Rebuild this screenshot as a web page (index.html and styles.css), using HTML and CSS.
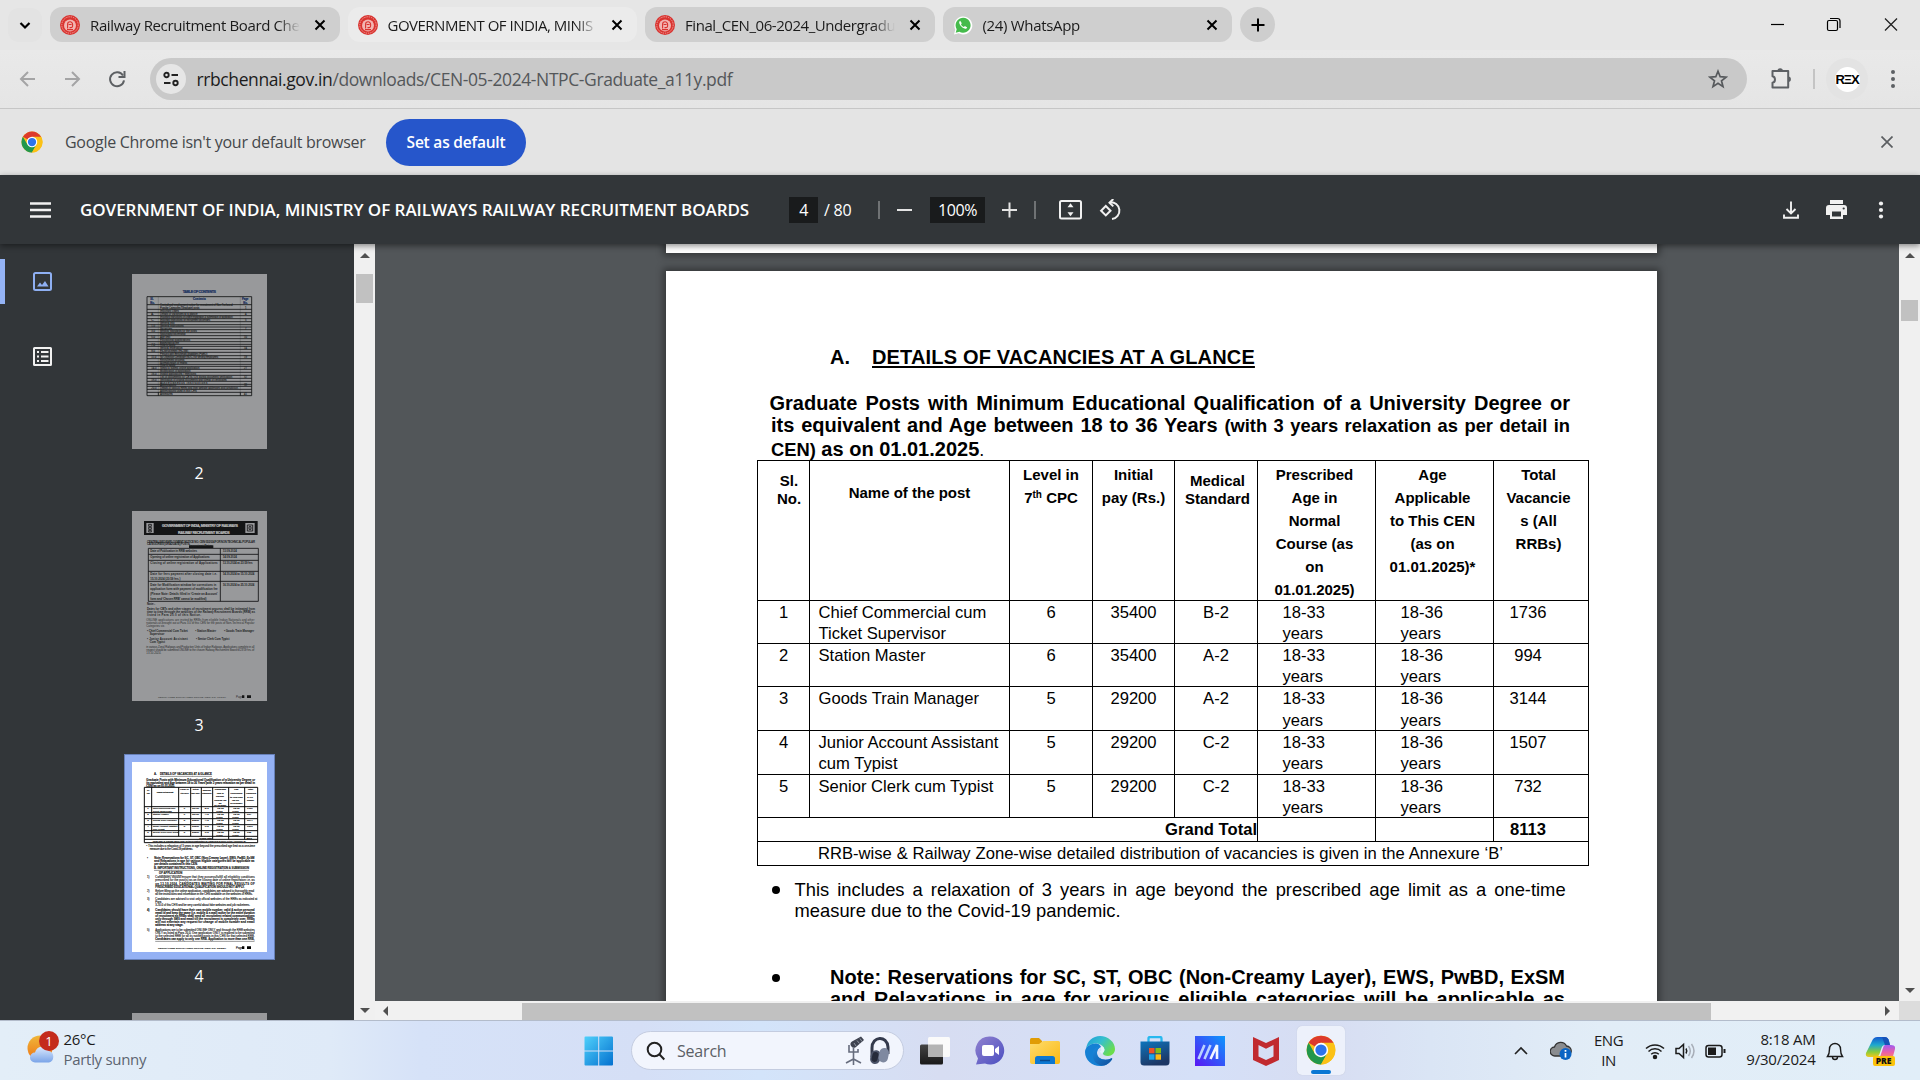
FILE: index.html
```html
<!DOCTYPE html>
<html lang="en">
<head>
<meta charset="utf-8">
<title>GOVERNMENT OF INDIA, MINISTRY OF RAILWAYS RAILWAY RECRUITMENT BOARDS</title>
<link rel="stylesheet" href="styles.css">
</head>
<body>
<svg class="defs" width="0" height="0">
  <defs>
    <symbol id="rrb" viewBox="0 0 20 20">
      <circle cx="10" cy="10" r="10" fill="#d9332f"/>
      <circle cx="10" cy="10" r="8.200" fill="none" stroke="#f0a09c" stroke-width="1" stroke-dasharray="1.4 .9"/>
      <circle cx="10" cy="10.500" r="6" fill="#f2b5b2"/>
      <path d="M7.600 13.500V9.300a2.500 2.500 0 0 1 5 0v1.800a1.500 1.500 0 0 1-1.500 1.500H9.500M8.600 9.500h3M7 14.600h6" fill="none" stroke="#d9332f" stroke-width="1.100"/>
    </symbol>
    <symbol id="x" viewBox="0 0 12 12"><path d="M1.500 1.500l9 9M10.500 1.500l-9 9" fill="none" stroke="currentColor" stroke-width="2"/></symbol>
    <symbol id="chrome" viewBox="0 0 48 48">
      <circle cx="24" cy="24" r="23" fill="#fbc116"/>
      <path d="M24 24L4.100 12.500A23 23 0 0 1 43.900 12.500z" fill="#dd3a2c"/>
      <path d="M4.100 12.500A23 23 0 0 0 24 47L34 29.700 24 24 14 29.700z" fill="#22974c"/>
      <path d="M24 47a23 23 0 0 0 19.900-34.500H24L34 29.700z" fill="#fbc116"/>
      <circle cx="24" cy="24" r="11.500" fill="#fff"/><circle cx="24" cy="24" r="9" fill="#2d73ea"/>
    </symbol>
  </defs>
</svg>
<div class="screen">

  <div class="tabstrip">
    <div class="tab-search"><svg width="12" height="9" viewBox="0 0 12 9"><path d="M1.500 2l4.500 4.500L10.500 2" fill="none" stroke="#000" stroke-width="2.200"/></svg></div>
    <div class="tabs">
      <div class="tab"><svg class="fav"><use href="#rrb"/></svg><span class="tab-title t1">Railway Recruitment Board Cher</span><svg class="tab-x"><use href="#x"/></svg></div>
      <div class="tab active"><svg class="fav"><use href="#rrb"/></svg><span class="tab-title t2">GOVERNMENT OF INDIA, MINIS</span><svg class="tab-x"><use href="#x"/></svg></div>
      <div class="tab"><svg class="fav"><use href="#rrb"/></svg><span class="tab-title t3">Final_CEN_06-2024_Undergradu</span><svg class="tab-x"><use href="#x"/></svg></div>
      <div class="tab"><svg class="fav" viewBox="0 0 20 20"><path d="M1 19.500l1.300-4.900A9 9 0 1 1 5.700 18.200z" fill="#fff"/><path d="M2.700 17.800l1-3.600a7.500 7.500 0 1 1 2.700 2.600z" fill="#45bb4c"/><path d="M7.200 5.800c-.9.500-1.300 1.500-.8 2.800.9 2.400 2.700 4.200 5 5 1.300.4 2.400-.1 2.800-1.200l-2.300-1.300-1 1c-1.500-.7-2.300-1.600-2.900-2.900l.8-1z" fill="#fff"/></svg><span class="tab-title t4">(24) WhatsApp</span><svg class="tab-x"><use href="#x"/></svg></div>
    </div>
    <div class="new-tab"><svg width="14" height="14" viewBox="0 0 14 14"><path d="M7 .5v13M.5 7h13" stroke="#000" stroke-width="2"/></svg></div>
    <div class="win-controls">
      <svg viewBox="0 0 57 50"><path d="M22 24.500h13" stroke="#000" stroke-width="1.200"/></svg>
      <svg viewBox="0 0 57 50"><rect x="21.500" y="20.500" width="10" height="10" rx="1.500" fill="none" stroke="#000" stroke-width="1.200"/><path d="M24 18.500h7.500a2.500 2.500 0 0 1 2.500 2.500v7" fill="none" stroke="#000" stroke-width="1.200"/></svg>
      <svg viewBox="0 0 57 50"><path d="M22 18.500l12 12M34 18.500l-12 12" stroke="#222" stroke-width="1.300"/></svg>
    </div>
  </div>

  <div class="navbar">
    <svg class="nav-icons" width="150" height="58" viewBox="0 0 150 58" fill="none" stroke-width="2">
      <path d="M35 29H21.500M28 22l-7 7 7 7" stroke="#a4a4a5"/>
      <path d="M65 29h13.500M72 22l7 7-7 7" stroke="#a4a4a5"/>
      <path d="M123 25.500a7 7 0 1 0 1 4.800" stroke="#5d6063"/><path d="M124.500 21v6h-6" stroke="#5d6063"/>
    </svg>
    <div class="omnibox">
      <div class="site-info"><svg width="16" height="16" viewBox="0 0 16 16" fill="none" stroke="#222" stroke-width="1.900"><circle cx="3.500" cy="4" r="2.200"/><path d="M8.500 4H15M1 12h6.500"/><circle cx="12.500" cy="12" r="2.200"/></svg></div>
      <div class="url"><b>rrbchennai.gov.in</b>/downloads/CEN-05-2024-NTPC-Graduate_a11y.pdf</div>
      <svg class="star" width="20" height="20" viewBox="0 0 20 20"><path d="M10 2.200l2.200 5.500 5.900.4-4.600 3.700 1.500 5.800-5-3.300-5 3.300 1.500-5.800L1.900 8.100l5.900-.4z" fill="none" stroke="#56595c" stroke-width="1.700"/></svg>
    </div>
    <svg class="puzzle" width="24" height="24" viewBox="0 0 24 24"><path d="M3.500 5h15.700v16.500H3.500v-4.700c3.300-.6 3.300-6 0-6.600z" fill="none" stroke="#5d6064" stroke-width="2" stroke-linejoin="round"/><path d="M8.500 5a2.700 2.700 0 0 1 5.400 0M19.200 10.500a2.700 2.700 0 0 1 0 5.400" fill="#5d6064"/></svg>
    <i class="nav-divider"></i>
    <div class="avatar"><span>RΞX</span></div>
    <svg class="kebab" width="6" height="20" viewBox="0 0 6 20" fill="#5d6064"><circle cx="3" cy="3" r="2"/><circle cx="3" cy="10" r="2"/><circle cx="3" cy="17" r="2"/></svg>
  </div>

  <div class="infobar">
    <svg class="info-chrome"><use href="#chrome"/></svg>
    <span class="info-text">Google Chrome isn't your default browser</span>
    <span class="info-btn">Set as default</span>
    <svg class="info-x" width="12" height="12" viewBox="0 0 12 12"><path d="M.5.5l11 11M11.500.5l-11 11" stroke="#5b5e61" stroke-width="1.700"/></svg>
  </div>

  <div class="pdfbar">
    <svg class="burger" width="21" height="16" viewBox="0 0 21 16"><path d="M0 1.500h21M0 8h21M0 14.500h21" stroke="#f1f1f1" stroke-width="2.300"/></svg>
    <span class="pdf-title">GOVERNMENT OF INDIA, MINISTRY OF RAILWAYS RAILWAY RECRUITMENT BOARDS</span>
    <span class="box page-no">4</span><span class="page-of">/ 80</span>
    <i class="sep s1"></i>
    <svg class="minus" width="15" height="16" viewBox="0 0 15 16"><path d="M0 8h15" stroke="#e4e4e4" stroke-width="2"/></svg>
    <span class="box zoom">100%</span>
    <svg class="plus" width="15" height="16" viewBox="0 0 15 16"><path d="M0 8h15M7.500.5v15" stroke="#e4e4e4" stroke-width="2"/></svg>
    <i class="sep s2"></i>
    <svg class="fit" width="23" height="20" viewBox="0 0 23 20"><rect x="1" y="1" width="21" height="17.500" rx="1.500" fill="none" stroke="#f1f1f1" stroke-width="2"/><path d="M11.500 3.200l3 4h-6zM11.500 16.300l3-4h-6z" fill="#f1f1f1"/></svg>
    <svg class="rotate" width="23" height="22" viewBox="0 0 23 22" fill="none" stroke="#f1f1f1" stroke-width="2"><path d="M6.800 7l4.700 4.700-4.700 4.700-4.700-4.700z"/><path d="M11 3.300a8.400 8.400 0 1 1 2 16.700"/><path d="M14.300 0L10.500 3.700l3.800 3.700"/></svg>
    <svg class="download" width="16" height="18" viewBox="0 0 16 18" fill="none" stroke="#f1f1f1" stroke-width="1.900"><path d="M8 .5v12M3.500 8L8 12.500 12.500 8M1 13.500v3.300h14v-3.300"/></svg>
    <svg class="print" width="21" height="19" viewBox="0 0 21 19"><path d="M4 0h13v4H4zM3 5h15a3 3 0 0 1 3 3v7h-4v4H4v-4H0V8a3 3 0 0 1 3-3z" fill="#f1f1f1"/><path d="M6 11.500h9v5H6z" fill="#323639"/><circle cx="17.700" cy="8.500" r="1.100" fill="#323639"/></svg>
    <svg class="kebab2" width="6" height="18" viewBox="0 0 6 18" fill="#f1f1f1"><circle cx="3" cy="2.500" r="2.100"/><circle cx="3" cy="9" r="2.100"/><circle cx="3" cy="15.500" r="2.100"/></svg>
  </div>

  <div class="viewer">
    <div class="rail">
      <div class="rail-item on"><svg width="19" height="19" viewBox="0 0 19 19"><rect x="1" y="1" width="17" height="17" rx="1.500" fill="none" stroke="#8fb0f3" stroke-width="2"/><path d="M4 14.500l3-4 2 2.500 3-4 3.500 5.500z" fill="#8fb0f3"/></svg></div>
      <div class="rail-item"><svg width="19" height="19" viewBox="0 0 19 19" fill="none" stroke="#f1f1f1"><rect x="1" y="1" width="17" height="17" rx=".5" stroke-width="2"/><path d="M4 5h2M4 9.500h2M4 14h2M8 5h7.500M8 9.500h7.500M8 14h7.500" stroke-width="2"/></svg></div>
    </div>
    <div class="thumbs">
      <svg class="thumb" width="135" height="175" viewBox="0 0 405 525">
        <rect width="405" height="525" fill="#98999b"/>
        <g fill="none" stroke="#151617" stroke-width="2.600">
          <path d="M45 68h314v297H45zM45 92h314M45 106h314M45 116h314M45 125h314M45 134h314M45 143h314M45 152h314M45 159h314M45 167h314M45 176h314M45 185h314M45 194h314M45 203h314M45 211h314M45 217h314M45 226h314M45 235h314M45 245h314M45 254h314M45 263h314M45 271h314M45 277h314M45 286h314M45 295h314M45 304h314M45 313h314M45 322h314M45 331h314M45 337h314M45 346h314M45 355h314"/>
          <path d="M79 355v10M325 355v10"/><path d="M79 68v290M325 68v290" stroke-width="1" opacity=".5"/>
        </g>
        <g font-size="8" font-weight="bold" fill="#20335f" stroke="#20335f" stroke-width=".7"><text x="152" y="56" font-size="11" textLength="100">TABLE OF CONTENTS</text><text x="55" y="78">Sl.</text><text x="55" y="89">No.</text><text x="183" y="79" textLength="38">Contents</text><text x="330" y="78">Page</text><text x="334" y="89">No.</text></g>
        <g font-size="8" fill="#242526" stroke="#242526" stroke-width=".3">
          <text x="84" y="97" textLength="218">Centralised employment notice for recruitment of Non Technical</text><text x="84" y="105" textLength="118">Popular Categories (Graduate) posts</text><text x="84" y="115">Important Dates</text><text x="84" y="124">Details of vacancies at a glance</text><text x="84" y="133" textLength="218">Important instructions on online registration &amp; submission of application</text><text x="84" y="142" textLength="150">Important instructions on recruitment processes</text><text x="84" y="151">General info</text><text x="84" y="159">General instructions</text><text x="84" y="167">Vacancies</text><text x="84" y="175">Medical standards for the posts</text><text x="84" y="184">Nationality/citizenship</text><text x="84" y="193">Age limit</text><text x="84" y="202">Educational qualifications</text><text x="84" y="210">Examination fee</text><text x="84" y="217">How to apply</text><text x="84" y="225">Vertical reservation</text><text x="84" y="234">Ex-servicemen (Ex-SM)</text><text x="84" y="244" textLength="142">Persons with Benchmark disabilities (PwBD)</text><text x="84" y="253" textLength="174">No Objection Certificate (NOC) for serving employees</text><text x="84" y="262">Recruitment process</text><text x="84" y="270">Normalization of marks</text><text x="84" y="277">How to apply</text><text x="84" y="285">Steps to submit online application</text><text x="84" y="294">Modification of application</text><text x="84" y="303">Invalid applications / rejections</text><text x="84" y="312" textLength="217">List of documents for CBTs / DV during document verification</text><text x="84" y="321" textLength="200">Verification of original documents and format of certificates</text><text x="84" y="330" textLength="142">Miscellaneous instructions</text><text x="84" y="337">Abbreviations</text><text x="84" y="345" textLength="234">Details of various RRBs and their website addresses and jurisdiction</text><text x="84" y="354">Abbreviations used in this CEN</text><text x="84" y="363">Annexures</text>
          <text x="58" y="124">A.</text><text x="58" y="142">C.</text><text x="58" y="159">1.0</text><text x="58" y="175">3.0</text><text x="58" y="193">5.0</text><text x="58" y="217">7.0</text><text x="58" y="234">9.0</text><text x="58" y="253">11.0</text><text x="58" y="285">14.0</text><text x="58" y="303">16.0</text><text x="58" y="321">18.0</text><text x="58" y="345">20.0</text><text x="339" y="105">1</text><text x="339" y="124">4</text><text x="339" y="142">5</text><text x="339" y="167">7</text><text x="336" y="193">10</text><text x="336" y="225">14</text><text x="336" y="253">19</text><text x="336" y="285">27</text><text x="336" y="312">32</text><text x="336" y="337">38</text><text x="336" y="363">41</text>
        </g>
      </svg>
      <span class="thumb-no">2</span>
      <svg class="thumb th3" width="135" height="190" viewBox="0 0 405 570">
        <rect width="405" height="570" fill="#98999b"/>
        <rect x="36" y="30" width="341" height="42" fill="#141516"/><rect x="43" y="36" width="22" height="30" fill="#98999b"/><rect x="340" y="36" width="28" height="30" fill="#98999b"/><path d="M50 40h8v6h-8zM50 49h8v6h-8zM50 58h8v5h-8zM346 42h16v18h-16zM351 47h6v8h-6z" fill="none" stroke="#141516" stroke-width="2.500"/>
        <g font-size="11" font-weight="bold" fill="#b9babb" stroke="#b9babb" stroke-width=".6"><text x="90" y="49" textLength="228">GOVERNMENT OF INDIA, MINISTRY OF RAILWAYS</text><text x="138" y="68" textLength="155">RAILWAY RECRUITMENT BOARDS</text></g>
        <rect x="171" y="103" width="73" height="8" fill="#141516"/>
        <path d="M49 112h330v159H49zM265 112v159M49 130h330M49 148h330M49 181h330M49 211h330" fill="none" stroke="#141516" stroke-width="2.600"/>
        <g font-size="8.500" fill="#1b1c1d" font-weight="bold">
          <text x="45" y="96" textLength="324">CENTRALISED EMPLOYMENT NOTICE NO. CEN 05/2024 FOR NON TECHNICAL POPULAR</text><text x="45" y="103" textLength="128">CATEGORIES (GRADUATE) POSTS</text><text x="172" y="109" textLength="70">Important Dates</text>
          <text x="55" y="123" textLength="140">Date of Publication in RRB websites</text><text x="272" y="123">13.09.2024</text><text x="55" y="141" textLength="178">Opening of online registration of Applications</text><text x="272" y="141">14.09.2024</text><text x="55" y="159" textLength="202">Closing of online registration of Applications</text><text x="272" y="159" textLength="90">13.10.2024 at 23:59 hrs</text>
          <text x="55" y="192" textLength="200">Date for fees payment after closing date i.e.</text><text x="55" y="207" textLength="90">15.10.2024 (23:59 hrs.)</text><text x="272" y="192" textLength="95">14.10.2024 to 15.10.2024</text><text x="55" y="225" textLength="198">Date for Modification window for corrections in</text><text x="55" y="237" textLength="202">application form with payment of modification fee</text><text x="55" y="252" textLength="202">(Please Note: Details filled in ‘Create an Account’</text><text x="55" y="267" textLength="168">form and ‘Chosen RRB’ cannot be modified)</text><text x="272" y="225" textLength="95">16.10.2024 to 25.10.2024</text>
          <text x="45" y="282">Note:-</text><text x="45" y="297" textLength="324">Dates for CBTs and other stages of recruitment process shall be intimated from</text><text x="45" y="306" textLength="324">time to time through the websites of the Railway Recruitment Boards (RRB) as</text><text x="45" y="315" textLength="162">listed in Para 20.0 of this Notice.</text>
          <text x="45" y="363" textLength="122">• Chief Commercial Cum Ticket</text><text x="53" y="371">Supervisor</text><text x="190" y="363" textLength="62">• Station Master</text><text x="276" y="363" textLength="90">• Goods Train Manager</text><text x="45" y="387" textLength="122">• Junior Account Assistant</text><text x="53" y="396">Cum Typist</text><text x="192" y="387" textLength="100">• Senior Clerk Cum Typist</text>
        </g>
        <g font-size="8.500" fill="#2b2c2d"><text x="43" y="330" textLength="324">ONLINE applications are invited by RRBs from eligible Indian Nationals and other</text><text x="43" y="339" textLength="324">nationals as brought out at Para 3.0 of this CEN for the posts of Non-Technical Popular</text><text x="43" y="347">Categories viz.</text><text x="43" y="411" textLength="324">in various Zonal Railways and Production Units of Indian Railways. Applications complete in all</text><text x="43" y="420" textLength="324">respect should be submitted ONLINE to the chosen Railway Recruitment Board till 23:59 hrs. of</text><text x="43" y="428">13.10.2024.</text><text x="78" y="560" font-size="7" textLength="204">CENTRALISED EMPLOYMENT NOTICE (CEN) NO. 05/2024</text><text x="312" y="560">Page</text></g><path d="M330 553h7v8h-7zM345 553h12v8h-12z" fill="#141516"/>
      </svg>
      <span class="thumb-no">3</span>
      <div class="selected"><svg class="thumb" width="135" height="190" viewBox="0 0 405 570">
        <rect width="405" height="570" fill="#fff"/>
        <path d="M37 76h340v166H37zM59 76v147M140 76v147M176 76v147M208 76v147M242 76v156M290 76v156M338 76v156M37 134h340M37 152h340M37 170h340M37 188h340M37 206h340M37 223h340M37 232h340" fill="none" stroke="#000" stroke-width="2.900"/>
        <g font-size="8.500" font-weight="bold" fill="#111">
          <text x="66" y="39">A.</text><text x="84" y="39" textLength="156" text-decoration="underline">DETAILS OF VACANCIES AT A GLANCE</text><text x="43" y="57" textLength="326">Graduate Posts with Minimum Educational Qualification of a University Degree or</text><text x="43" y="66" textLength="326">its equivalent and Age between 18 to 36 Years (with 3 years relaxation as per detail in</text><text x="43" y="74" textLength="86">CEN) as on 01.01.2025.</text>
        </g>
        <g font-size="7" font-weight="bold" fill="#111"><text x="45" y="88">Sl.</text><text x="44" y="95">No.</text><text x="74" y="93" textLength="50">Name of the post</text><text x="144" y="85" textLength="26">Level in</text><text x="145" y="96" textLength="25">7th CPC</text><text x="182" y="85">Initial</text><text x="178" y="96" textLength="26">pay (Rs.)</text><text x="212" y="88" textLength="25">Medical</text><text x="210" y="96" textLength="28">Standard</text><text x="248" y="84" textLength="34">Prescribed</text><text x="254" y="95">Age in</text><text x="252" y="106">Normal</text><text x="247" y="117" textLength="36">Course (as</text><text x="260" y="125">on</text><text x="247" y="133" textLength="36">01.01.2025)</text><text x="306" y="85">Age</text><text x="295" y="96" textLength="36">Applicable</text><text x="294" y="107" textLength="38">to This CEN</text><text x="300" y="117">(as on</text><text x="295" y="127" textLength="36">01.01.2025)*</text><text x="347" y="85">Total</text><text x="342" y="96" textLength="30">Vacancie</text><text x="346" y="107">s (All</text><text x="345" y="116">RRBs)</text><text x="202" y="230" textLength="38">Grand Total</text><text x="344" y="230">8113</text></g>
        <g font-size="7.500" fill="#222"><text x="46" y="142">1</text><text x="62" y="142" textLength="68">Chief Commercial cum</text><text x="62" y="150">Ticket Supervisor</text><text x="155" y="142">6</text><text x="180" y="142">35400</text><text x="218" y="142">B-2</text><text x="256" y="142">18-33</text><text x="253" y="151">years</text><text x="304" y="142">18-36</text><text x="301" y="151">years</text><text x="345" y="142">1736</text>
        <text x="46" y="160">2</text><text x="62" y="160">Station Master</text><text x="155" y="160">6</text><text x="180" y="160">35400</text><text x="218" y="160">A-2</text><text x="256" y="160">18-33</text><text x="253" y="169">years</text><text x="304" y="160">18-36</text><text x="301" y="169">years</text><text x="345" y="160">994</text>
        <text x="46" y="178">3</text><text x="62" y="178">Goods Train Manager</text><text x="155" y="178">5</text><text x="180" y="178">29200</text><text x="218" y="178">A-2</text><text x="256" y="178">18-33</text><text x="253" y="187">years</text><text x="304" y="178">18-36</text><text x="301" y="187">years</text><text x="345" y="178">3144</text>
        <text x="46" y="196">4</text><text x="62" y="196" textLength="74">Junior Account Assistant</text><text x="62" y="204">cum Typist</text><text x="155" y="196">5</text><text x="180" y="196">29200</text><text x="218" y="196">C-2</text><text x="256" y="196">18-33</text><text x="253" y="205">years</text><text x="304" y="196">18-36</text><text x="301" y="205">years</text><text x="345" y="196">1507</text>
        <text x="46" y="213">5</text><text x="62" y="213">Senior Clerk cum Typist</text><text x="155" y="213">5</text><text x="180" y="213">29200</text><text x="218" y="213">C-2</text><text x="256" y="213">18-33</text><text x="253" y="222">years</text><text x="304" y="213">18-36</text><text x="301" y="222">years</text><text x="345" y="213">732</text>
        <text x="62" y="240" textLength="280">RRB-wise &amp; Railway Zone-wise detailed distribution of vacancies is given in the Annexure ‘B’</text></g>
        <g font-size="8.500" fill="#222"><text x="43" y="256" textLength="326">• This includes a relaxation of 3 years in age beyond the prescribed age limit as a one-time</text><text x="53" y="264" textLength="130">measure due to the Covid-19 pandemic.</text>
        <text x="45" y="348">1)</text><text x="70" y="348" textLength="298">Candidates should ensure that they possess/fulfill all eligibility conditions</text><text x="70" y="357" textLength="298">prescribed for the post(s) as on the closing date of online registration i.e. as</text><text x="45" y="390">2)</text><text x="70" y="390" textLength="296">Before filling up the online application, candidates are advised to thoroughly read</text><text x="70" y="399" textLength="292">all the instructions and information in the CEN available on the websites of RRBs.</text><text x="45" y="414">3)</text><text x="70" y="415" textLength="306">Candidates are advised to visit only official websites of the RRBs as indicated at</text><text x="70" y="424">Para</text><text x="70" y="432" textLength="284">3.20.0 of this CEN and be very careful about fake websites and job racketeers.</text><text x="45" y="507">5)</text><text x="70" y="507" textLength="298">Applications are to be submitted ONLINE ONLY and through the RRB websites</text><text x="70" y="516" textLength="298">ONLY as listed at Para 20.0. One application ONLY is required to be submitted</text><text x="70" y="525" textLength="298">to the selected RRB for all its notified posts in this CEN for that selected RRB.</text><text x="78" y="561" font-size="7" textLength="204">CENTRALISED EMPLOYMENT NOTICE (CEN) NO. 05/2024</text><text x="312" y="561">Page</text></g>
        <g font-size="8.500" font-weight="bold" fill="#111"><text x="45" y="290">•</text><text x="67" y="291" textLength="300">Note: Reservations for SC, ST, OBC (Non-Creamy Layer), EWS, PwBD, ExSM</text><text x="67" y="300" textLength="300">and Relaxations in age for various eligible categories will be applicable as</text><text x="67" y="309" textLength="130">per details contained in this CEN.</text><text x="66" y="321" textLength="285" text-decoration="underline">B. IMPORTANT INSTRUCTIONS, ONLINE REGISTRATION &amp; SUBMISSION</text><text x="81" y="337" textLength="70" text-decoration="underline">OF APPLICATION</text><text x="70" y="369" textLength="298">on 13.10.2024. CANDIDATES WAITING FOR FINAL RESULTS OF</text><text x="70" y="377" textLength="268">PRESCRIBED EDUCATIONAL QUALIFICATION SHOULD NOT APPLY.</text><text x="45" y="447">4)</text><text x="70" y="448" textLength="298">Candidates should have their own mobile number, valid &amp; active personal</text><text x="70" y="457" textLength="298">email id and keep the same (i.e. mobile &amp; e-mail) active for the entire duration</text><text x="70" y="466" textLength="298">of recruitment as RRBs shall send all recruitment related communications</text><text x="70" y="475" textLength="298">only through SMS and email till the recruitment is completely over. RRBs</text><text x="70" y="484" textLength="298">will not entertain any request for change of mobile number and email</text><text x="70" y="493" textLength="84">address at any stage.</text><text x="70" y="534" textLength="298" text-decoration="underline">Candidates can apply to only one RRB. Application to more than one RRB,</text></g>
        <path d="M330 553h7v8h-7zM345 553h12v8h-12z"/>
      </svg></div>
      <span class="thumb-no last">4</span>
      <div class="thumb next"></div>
    </div>
    <div class="vscroll side"><i class="up"></i><b></b><i class="down"></i></div>
    <div class="doc-col">
      <div class="doc">
        <div class="page prev"></div>
        <div class="page cur">
          <h1><span>A.</span><u>DETAILS OF VACANCIES AT A GLANCE</u></h1>
          <div class="intro">
            <p class="l1">Graduate Posts with Minimum Educational Qualification of a University Degree or</p>
            <p class="l2">its equivalent and Age between 18 to 36 Years <small>(with 3 years relaxation as per detail in</small></p>
            <p class="l3"><small>CEN)</small> as on 01.01.2025<em>.</em></p>
          </div>
          <div class="grid">
            <div class="h n">Sl.<br>No.</div><div class="h name">Name of the post</div><div class="h">Level in<br>7<sup>th</sup> CPC</div><div class="h">Initial<br>pay (Rs.)</div><div class="h m">Medical<br>Standard</div><div class="h age">Prescribed<br>Age in<br>Normal<br>Course (as<br>on<br>01.01.2025)</div><div class="h age">Age<br>Applicable<br>to This CEN<br>(as on<br>01.01.2025)*</div><div class="h tot">Total<br>Vacancie<br>s (All<br>RRBs)</div>
            <div>1</div><div class="post">Chief Commercial cum<br>Ticket Supervisor</div><div>6</div><div>35400</div><div>B-2</div><div class="yr">18-33<br>years</div><div class="yr">18-36<br>years</div><div class="v">1736</div>
            <div>2</div><div class="post">Station Master</div><div>6</div><div>35400</div><div>A-2</div><div class="yr">18-33<br>years</div><div class="yr">18-36<br>years</div><div class="v">994</div>
            <div class="low">3</div><div class="post low">Goods Train Manager</div><div class="low">5</div><div class="low">29200</div><div class="low">A-2</div><div class="yr low">18-33<br>years</div><div class="yr low">18-36<br>years</div><div class="v low">3144</div>
            <div>4</div><div class="post">Junior Account Assistant<br>cum Typist</div><div>5</div><div>29200</div><div>C-2</div><div class="yr">18-33<br>years</div><div class="yr">18-36<br>years</div><div class="v">1507</div>
            <div>5</div><div class="post">Senior Clerk cum Typist</div><div>5</div><div>29200</div><div>C-2</div><div class="yr">18-33<br>years</div><div class="yr">18-36<br>years</div><div class="v">732</div>
            <div class="gt">Grand Total</div><div></div><div></div><div class="v bold">8113</div>
            <div class="foot"><span>RRB-wise &amp; Railway Zone-wise detailed distribution of vacancies is given in the Annexure ‘B’</span></div>
          </div>
          <div class="bullet b1"><i></i><div><p class="just">This includes a relaxation of 3 years in age beyond the prescribed age limit as a one-time</p><p>measure due to the Covid-19 pandemic.</p></div></div>
          <div class="bullet b2"><i></i><div><p class="just">Note: Reservations for SC, ST, OBC (Non-Creamy Layer), EWS, PwBD, ExSM</p><p class="just">and Relaxations in age for various eligible categories will be applicable as</p></div></div>
        </div>
      </div>
      <div class="hscroll"><i class="left"></i><b></b><i class="right"></i></div>
    </div>
    <div class="vcol"><div class="vscroll main"><i class="up"></i><b></b><i class="down"></i></div><div class="corner"></div></div>
  </div>

  <div class="taskbar">
    <div class="weather">
      <svg width="34" height="34" viewBox="0 0 34 34"><defs><linearGradient id="sun" x2="0" y2="1"><stop offset="0" stop-color="#efb73a"/><stop offset="1" stop-color="#ee7415"/></linearGradient><linearGradient id="cl" x2="0" y2="1"><stop offset="0" stop-color="#dbe9fd"/><stop offset="1" stop-color="#7aa4e8"/></linearGradient></defs><circle cx="14" cy="17" r="12.500" fill="url(#sun)"/><path d="M9 31.500a5 5 0 0 1 0-10 7.500 7.500 0 0 1 14-1.500 6 6 0 0 1 0 11.500z" fill="url(#cl)"/><circle cx="23" cy="8" r="10" fill="#c42b1c" transform="translate(0 2)"/></svg>
      <span class="badge">1</span>
      <div><p class="deg">26°C</p><p class="cond">Partly sunny</p></div>
    </div>
    <svg class="start" width="30" height="30" viewBox="0 0 30 30"><defs><linearGradient id="win" x2="1" y2="1"><stop offset="0" stop-color="#4fd0fb"/><stop offset="1" stop-color="#0471cf"/></linearGradient></defs><path d="M.5 1.500q0-1 1-1h12.700v14H.5zM15.200.5h12.600q1.200 0 1.200 1v13H15.200zM.5 15.500h13.700v14H1.500q-1 0-1-1zM15.200 15.500H29v13q0 1-1 1H15.200z" fill="url(#win)"/></svg>
    <div class="search">
      <svg width="20" height="20" viewBox="0 0 20 20" fill="none" stroke="#222" stroke-width="2"><circle cx="8.500" cy="8.500" r="6.800"/><path d="M13.300 13.300l5 5.200"/></svg>
      <span>Search</span>
      <svg class="gear" width="48" height="30" viewBox="0 0 48 30">
        <path d="M8 5.500L17 .5l3 3.500-8 7a3 3 0 0 1-4-5.500z" fill="#3f4350"/><path d="M10 7l2 3M13 4.500l2.500 3M16 2.500l2 3" stroke="#9197a3" stroke-width="1"/><path d="M5 9v7h9v-3M9.500 12v17M9.500 23L2 27M9.500 23l7.500 4" fill="none" stroke="#666c7d" stroke-width="1.600"/>
        <path d="M28 21V12c0-12 15-13 16-1v7" fill="none" stroke="#343a4c" stroke-width="3"/><rect x="26.500" y="14" width="10" height="14" rx="5" fill="#4b5368" transform="rotate(12 31 21)"/><rect x="35" y="12" width="9.500" height="14.500" rx="4.700" fill="#7f89a0" transform="rotate(12 40 19)"/><rect x="28" y="16" width="6" height="10" rx="3" fill="#262b3a" transform="rotate(12 31 21)"/>
      </svg>
    </div>
    <div class="apps">
      <svg viewBox="0 0 30 30"><defs><linearGradient id="tv" x2="0" y2="1"><stop offset="0" stop-color="#444"/><stop offset="1" stop-color="#191919"/></linearGradient></defs><rect x="0" y="8.500" width="23" height="20" rx="1.500" fill="url(#tv)"/><rect x="8" y="1" width="22" height="20" rx="1.500" fill="#fafafa"/><path d="M8 8.500h15V21H9.500Q8 21 8 19.500z" fill="#b3b3b3"/></svg>
      <svg viewBox="0 0 30 30"><defs><linearGradient id="ch" x2="1" y2="1"><stop offset="0" stop-color="#9182cf"/><stop offset="1" stop-color="#4b4fc1"/></linearGradient></defs><path d="M15 .5a14 14 0 1 1-5 27L1 28.500l2-6A14 14 0 0 1 15 .5z" fill="url(#ch)"/><rect x="7" y="9" width="12" height="11" rx="2" fill="#fff"/><path d="M20 13l4-3v9l-4-3z" fill="#fff"/></svg>
      <svg viewBox="0 0 30 30"><defs><linearGradient id="fo" x2="1" y2="1"><stop offset="0" stop-color="#fddc6e"/><stop offset="1" stop-color="#fcb912"/></linearGradient></defs><path d="M0 3.500Q0 2 1.500 2H9l3 3v4H0z" fill="#e09c05"/><path d="M0 8h9l4-3h15.500Q30 5 30 6.500V26q0 2-2 2H2q-2 0-2-2z" fill="url(#fo)"/><path d="M5 28v-5.500Q5 20 7.500 20h15q2.500 0 2.500 2.500V28z" fill="#0d78d1"/><path d="M10 24.500h10" stroke="#0a4a8c" stroke-width="1.500"/></svg>
      <svg viewBox="0 0 30 30"><defs><linearGradient id="e1" x2="1" y2=".6"><stop offset="0" stop-color="#1c9ad8"/><stop offset=".5" stop-color="#35bfcf"/><stop offset="1" stop-color="#6bdd4c"/></linearGradient><linearGradient id="e2" x2="1" y2="1"><stop offset="0" stop-color="#1a8bdf"/><stop offset="1" stop-color="#124f9c"/></linearGradient></defs><path d="M1 13C2 5 8 0 15 0c8 0 15 6 15 13 0 4-3 7-7 7-3 0-5-1-5-2.500 0-1 1.300-1.500 1.300-4C19 10 15 7.500 11 7.500 6 7.500 2 10 1 13z" fill="url(#e1)"/><path d="M11 7.500C4 7.500 0 12 0 16c0 8 7 14 15 14 5 0 9-2 12-6.500.5-.8 0-1.500-1-1-7 3-14 0-14-6 0-3 2-5 4-5.500C15 8.500 13 7.500 11 7.500z" fill="#1580d4"/><path d="M12 11c-3 2-5 5-4 10 1 6 6 9 11 8.500 3-.8 6-3 8-6 .5-.8 0-1.500-1-1-7 3-15 0-14-6 0-2 1-4 3-5z" fill="url(#e2)"/><path d="M16 11.500c2 .5 3.500 3-.5 5" fill="none" stroke="#e4f3fb" stroke-width="3"/></svg>
      <svg viewBox="0 0 30 30"><defs><linearGradient id="st" x2=".4" y2="1"><stop offset="0" stop-color="#0e75bd"/><stop offset="1" stop-color="#1d3765"/></linearGradient></defs><path d="M8.500 7V2.500Q8.500 1 10 1h10q1.500 0 1.500 1.500V7" fill="none" stroke="#27b8ef" stroke-width="2.300"/><path d="M.5 5.500h29V26q0 3.500-3.500 3.500H4Q.5 29.500.5 26z" fill="url(#st)"/><path d="M9 12h5.500v5.300H9z" fill="#ee5124"/><path d="M15.500 12H21v5.300h-5.500z" fill="#83bb15"/><path d="M9 18.300h5.500v5.400H9z" fill="#1da4e8"/><path d="M15.500 18.300H21v5.400h-5.500z" fill="#fcb913"/></svg>
      <svg viewBox="0 0 30 30"><defs><linearGradient id="ma" x1="0" y1="1" x2="1" y2="0"><stop offset="0" stop-color="#5a15f4"/><stop offset="1" stop-color="#0c98fd"/></linearGradient></defs><rect width="30" height="30" fill="url(#ma)"/><path d="M3.500 23l6-14M9.500 23l6-14" stroke="#b9d2ff" stroke-width="2.600"/><path d="M15.500 23l6.500-14v14" fill="none" stroke="#f2f6ff" stroke-width="2.600"/></svg>
      <svg viewBox="0 0 30 30"><path d="M2 1l13 6 13-6v23l-13 6-13-6zM7.500 9v11.500L15 24l7.500-3.500V9L15 12.700z" fill="#c12a2f" fill-rule="evenodd"/></svg>
    </div>
    <div class="running"><svg width="30" height="30"><use href="#chrome"/></svg><i></i></div>
    <svg class="chev" width="14" height="9" viewBox="0 0 14 9"><path d="M1 8l6-6 6 6" fill="none" stroke="#222" stroke-width="1.600"/></svg>
    <svg class="cloud" width="22" height="20" viewBox="0 0 22 20"><path d="M5 15a4.500 4.500 0 0 1-.5-9A6.500 6.500 0 0 1 16.500 5 5 5 0 0 1 16 15z" fill="#8a8c8f" stroke="#333" stroke-width="1.300"/><circle cx="15.500" cy="13" r="6" fill="#0a64c4"/><path d="M15.500 12v4.500M15.500 9v1.700" stroke="#fff" stroke-width="1.700"/></svg>
    <div class="lang"><p>ENG</p><p>IN</p></div>
    <svg class="tray" width="82" height="22" viewBox="0 0 82 22" fill="none" stroke="#1b1b1b" stroke-width="1.500">
      <path d="M1 8.500a13 13 0 0 1 18 0M3.500 11.500a9.300 9.300 0 0 1 13 0M6.200 14.300a5.500 5.500 0 0 1 7.600 0"/><circle cx="10" cy="17" r="1.500" fill="#1b1b1b"/>
      <path d="M31 8.500h3l4.500-4v13l-4.500-4h-3z"/><path d="M41 8.500q1.500 2.500 0 5"/><path d="M43.500 6q3.500 5 0 10M46.500 4q5 7 0 14" stroke="#a8aeb8"/>
      <rect x="61" y="5.500" width="16" height="11.500" rx="2.500"/><rect x="63" y="7.500" width="8" height="7.500" fill="#1b1b1b" stroke="none"/><path d="M79.500 9v4" stroke-width="2"/>
    </svg>
    <div class="clock"><p>8:18 AM</p><p>9/30/2024</p></div>
    <svg class="bell" width="18" height="20" viewBox="0 0 18 20" fill="none" stroke="#1b1b1b" stroke-width="1.400"><path d="M1.500 15.500c1.500-2 2-3.500 2-7.500a5.500 5.500 0 0 1 11 0c0 4 .5 5.500 2 7.500zM6.500 16a2.500 2.500 0 0 0 5 0"/></svg>
    <div class="copilot"><svg width="30" height="30" viewBox="0 0 30 30"><defs><linearGradient id="c1" x2="0" y2="1"><stop offset="0" stop-color="#1358cf"/><stop offset=".4" stop-color="#1ea9cf"/><stop offset=".75" stop-color="#8ccc3a"/><stop offset="1" stop-color="#f0c81f"/></linearGradient><linearGradient id="c2" x2="0" y2="1"><stop offset="0" stop-color="#a05cf0"/><stop offset=".5" stop-color="#ec5fa5"/><stop offset="1" stop-color="#fb9a4a"/></linearGradient></defs><path d="M7 5q1.500-4 5.500-4h7q3.500 0 4.500 4l1 4h-5q-2.500 0-3.500 3l-2 6q-1 3-4 3H4q-4 0-3-4z" fill="url(#c1)"/><path d="M17 1h2.500q3.500 0 4.500 4l1 4h-5z" fill="#1552b8"/><path d="M20 9h6q5 0 4 4l-3 11H12q2 0 3-3l3-9q.7-3 2-3z" fill="url(#c2)"/></svg><span>PRE</span></div>
  </div>
</div>
</body>
</html>
```
FILE: styles.css
```css
* { box-sizing: border-box; }
body { margin: 0; background: #525659; font-family: "Open Sans", "Noto Sans", sans-serif; color: #1b1b1b; overflow: hidden; }
p, h1 { margin: 0; }
svg { display: block; flex: none; }
.defs { position: absolute; }
.screen { width: 1920px; height: 1080px; display: flex; flex-direction: column; overflow: hidden; }

/* tab strip */
.tabstrip { height: 50px; flex: none; display: flex; align-items: flex-start; padding-left: 8px; background: #e6e6e6; }
.tab-search { width: 34px; height: 34px; margin-top: 8px; border-radius: 11px; background: #e3e3e3; display: flex; align-items: center; justify-content: center; }
.tabs { display: flex; gap: 8px; margin: 7px 0 0 8px; }
.tab { width: 289.500px; height: 35px; padding: 0 13px 0 10px; display: flex; align-items: center; border-radius: 12px; background: #cfcfcf; }
.tab.active { background: #ebebeb; }
.fav { width: 20px; height: 20px; }
.tab-title { width: 212px; margin-left: 10px; font-size: 15px; line-height: 22px; color: #1b1b1b; white-space: nowrap; -webkit-mask-image: linear-gradient(90deg, #000 188px, transparent 210px); mask-image: linear-gradient(90deg, #000 188px, transparent 210px); }
.t1 { letter-spacing: -.36px; }
.t2 { letter-spacing: -.5px; }
.t3 { letter-spacing: -.45px; }
.t4 { letter-spacing: -.32px; }
.tab-x { width: 12px; height: 12px; margin-left: auto; margin-right: 1px; color: #000; }
.new-tab { width: 35px; height: 35px; margin: 7px 0 0 8px; border-radius: 50%; background: #cecece; display: flex; align-items: center; justify-content: center; }
.win-controls { margin-left: auto; display: flex; }
.win-controls svg { width: 57px; height: 50px; }

/* address bar */
.navbar { height: 59px; flex: none; display: flex; align-items: center; background: linear-gradient(#e9e9e9, #e5e5e5); border-bottom: 1px solid #c6c6c6; }
.omnibox { width: 1597px; height: 42px; display: flex; align-items: center; padding: 0 19px 0 6px; border-radius: 21px; background: #c9c9c9; }
.site-info { width: 30px; height: 30px; border-radius: 50%; background: #e6e6e6; display: flex; align-items: center; justify-content: center; }
.url { margin-left: 10.500px; font-size: 17.500px; line-height: 26px; letter-spacing: -.4px; color: #54575a; white-space: nowrap; }
.url b { font-weight: 400; color: #1c1c1c; }
.star { margin-left: auto; }
.puzzle { margin-left: 22px; margin-top: -3px; }
.nav-divider { width: 2px; height: 20px; margin-left: 20px; background: #c4c4c4; }
.avatar { width: 42px; height: 42px; margin-left: 11px; border-radius: 50%; display: flex; align-items: center; justify-content: center; background: #e3e3e3; }
.avatar span { width: 25px; height: 25px; border-radius: 50%; background: #fff; color: #000; font: 700 13px/25px "Liberation Sans", sans-serif; letter-spacing: -1.200px; text-align: center; white-space: nowrap; }
.kebab { margin-left: 22px; }

/* default browser prompt */
.infobar { height: 66px; flex: none; display: flex; align-items: center; padding: 0 27px 0 21px; background: #e4e4e4; }
.info-chrome { width: 22px; height: 22px; }
.info-text { width: 305px; margin-left: 22px; font-size: 16px; line-height: 24px; letter-spacing: -.29px; color: #45484b; white-space: nowrap; }
.info-btn { width: 140px; height: 47px; margin-left: 16px; border-radius: 24px; background: #2656cb; color: #fff; font-weight: 600; font-size: 15.500px; line-height: 47px; text-align: center; letter-spacing: -.2px; }
.info-x { margin-left: auto; }

/* pdf toolbar */
.pdfbar { height: 69px; flex: none; display: flex; align-items: center; padding: 0 36px 0 30px; background: #323639; color: #fff; font-size: 16px; position: relative; z-index: 2; box-shadow: 0 2px 6px rgba(0,0,0,.45); }
.pdf-title { width: 680px; margin-left: 29px; font-size: 17px; font-weight: 600; letter-spacing: -.05px; white-space: nowrap; }
.box { height: 26px; line-height: 26px; background: #191b1c; text-align: center; letter-spacing: -.4px; }
.page-no { width: 29px; margin-left: 29px; }
.page-of { width: 36px; margin-left: 6px; letter-spacing: -.2px; }
.sep { width: 2px; height: 18px; background: #6f7274; }
.s1 { margin-left: 18px; }
.minus { margin-left: 17px; }
.zoom { width: 55px; margin-left: 18px; }
.plus { margin-left: 17px; }
.s2 { margin-left: 17px; }
.fit { margin-left: 23px; }
.rotate { margin-left: 17px; }
.download { margin-left: auto; }
.print { margin-left: 27px; }
.kebab2 { margin-left: 31px; }

/* viewer */
.viewer { height: 776px; flex: none; display: flex; background: #323639; }
.rail { width: 70px; padding-top: 15px; }
.rail-item { height: 45px; margin-bottom: 30px; padding: 13px 0 0 33px; }
.rail-item.on { background: linear-gradient(#94b3f5, #94b3f5) 0 0 / 5px 45px no-repeat; border-radius: 0 4px 4px 0; }
.thumbs { width: 284px; height: 776px; overflow: hidden; display: flex; flex-direction: column; align-items: center; padding: 30px 26px 0 0; font-family: "Liberation Sans", sans-serif; }
.thumb { flex: none; }
.selected text { stroke: #1a1a1a; stroke-width: .35px; }
.thumb-no { flex: none; height: 62px; padding-top: 13px; color: #fff; font: 400 16px/22px "Open Sans", sans-serif; }
.th3 + .thumb-no { height: 53px; }
.selected { flex: none; width: 151px; height: 206px; padding: 7px; border: 1px solid #6780b8; background: #94b1f4; }
.thumb-no.last { height: 53px; padding-top: 5px; }
.next { width: 135px; height: 30px; background: #98999b; }
.vscroll { width: 21px; display: flex; flex-direction: column; align-items: center; background: #f0f0f0; }
.vscroll i, .hscroll i { border: 5px solid transparent; width: 0; height: 0; flex: none; }
.vscroll b { width: 17px; background: #c1c1c1; flex: none; }
.vscroll .up { margin-top: 4px; border-bottom-color: #505050; }
.vscroll .down { margin: auto 0 2px; border-top-color: #505050; }
.side b { height: 29px; margin-top: 16px; }
.doc-col { width: 1524px; display: flex; flex-direction: column; }
.doc { height: 757px; overflow: hidden; background: #525659; padding-left: 291px; }
.page { width: 991px; background: #fff; box-shadow: 0 0 7px 3px rgba(0,0,0,.35); }
.prev { height: 9px; }
.cur { height: 1200px; margin-top: 18px; padding: 74px 0 0 91px; color: #000; font-family: "Liberation Sans", Arial, sans-serif; }
h1 { display: flex; margin-left: 73px; font-size: 20px; line-height: 24px; white-space: nowrap; }
h1 span { width: 42px; }
h1 u { text-decoration-thickness: 2px; text-underline-offset: 2px; letter-spacing: .16px; }
.intro { width: 800px; margin: 23px 0 0 13px; font-weight: 700; font-size: 20px; }
.intro p { height: 22px; line-height: 22px; white-space: nowrap; }
.intro .l1, .intro .l2 { text-align-last: justify; }
.intro .l1 { margin-left: -.5px; }
.intro .l2, .intro .l3 { margin-left: 1px; }
.intro .l3 { height: 24px; line-height: 26px; }
.intro small { font-size: 18.330px; line-height: 1; }
.intro em { font-style: normal; font-weight: 400; font-size: 18px; line-height: 1; }
.grid { width: 832px; display: grid; grid-template-columns: 52px 200px 83px 82px 83px 118px 118px 95px; grid-template-rows: 140px 43px 43px 44px 44px 43px 24px 24px; border: solid #000; border-width: 0 1px 1px 0; font-size: 16.600px; line-height: 21.500px; text-align: center; }
.grid > div { border: solid #000; border-width: 1px 0 0 1px; padding-top: .5px; white-space: nowrap; min-width: 0; min-height: 0; }
.grid > .low { padding-top: 1.300px; }
.grid .h { padding-top: 2.300px; font-size: 15px; line-height: 23px; font-weight: 700; }
.grid .n { padding: 11.300px 0 0 11px; line-height: 18px; }
.grid .m { padding: 11.300px 0 0 3px; line-height: 18px; }
.grid .name { padding-top: 22.800px; line-height: 18px; }
.grid .age { padding-right: 4px; }
.grid .tot { padding-right: 5px; }
.grid sup { font-size: 10px; line-height: 0; vertical-align: 5px; }
.grid .post { padding-left: 8.500px; text-align: left; }
.grid .yr { padding-left: 24.500px; text-align: left; }
.grid .v { padding-right: 26px; }
.bold { font-weight: 700; }
.grid .gt { grid-column: 1 / 6; text-align: right; font-weight: 700; }
.grid .foot { grid-column: 1 / 9; padding-left: 60px; text-align: left; }
.foot span { display: block; width: 685px; text-align-last: justify; }
.bullet { display: flex; }
.bullet > i { width: 8px; height: 8px; flex: none; margin-left: 15px; border-radius: 50%; background: #000; }
.just { text-align-last: justify; white-space: nowrap; }
.b1 { margin-top: 13px; font-size: 18.330px; line-height: 21px; }
.b1 > i { margin-top: 7px; }
.b1 > div { width: 771px; margin-left: 14.600px; }
.b2 { margin-top: 45px; font-size: 20px; line-height: 22px; font-weight: 700; }
.b2 > i { margin-top: 8px; }
.b2 > div { width: 735px; margin-left: 50px; }
.hscroll { height: 19px; display: flex; align-items: center; background: #f1f1f1; }
.hscroll b { width: 1189px; height: 17px; margin: 2px 0 0 134px; background: #c1c1c1; }
.hscroll .left { margin-left: 3px; border-right-color: #505050; }
.hscroll .right { margin: 0 4px 0 auto; border-left-color: #505050; }
.vcol { width: 21px; }
.main { height: 757px; }
.main b { height: 21px; margin-top: 42px; }
.main .down { margin-bottom: 3px; }
.corner { height: 19px; background: #dcdcdc; }

/* taskbar */
.taskbar { height: 60px; flex: none; display: flex; align-items: center; border-top: 1px solid #b3bccb; background: linear-gradient(90deg, #e3eef8 0, #dfeaf8 330px, #d6e2f8 420px, #d5dff6 640px, #d3e4fa 760px, #d7ddf2 940px, #d5e0f8 1200px, #d7ddf2 1320px, #dae5f5 1430px, #e2edf7 1600px, #e1eef8 100%); }
.weather { display: flex; align-items: center; padding-left: 26px; width: 584px; position: relative; }
.weather > div { margin: -4px 0 0 3.500px; }
.badge { position: absolute; left: 39px; top: -2px; width: 20px; height: 20px; color: #fff; font-size: 13px; line-height: 20px; text-align: center; }
.weather svg { margin-top: -6px; }
.deg, .cond { font-size: 15px; line-height: 20px; letter-spacing: -.3px; }
.cond { color: #5c6470; }
.search { width: 273px; height: 39px; margin-left: 17px; display: flex; align-items: center; padding-left: 14px; border: 1px solid #c4cce0; border-radius: 20px; background: #f2f5fd; }
.search span { width: 56px; margin-left: 11px; font-size: 16px; letter-spacing: -.2px; color: #5b5f66; }
.gear { margin-left: 111px; }
.apps { display: flex; gap: 25.100px; margin-left: 16px; }
.apps svg { width: 30px; height: 30px; }
.running { width: 48px; height: 49px; margin-left: 16px; padding-top: 9px; display: flex; flex-direction: column; align-items: center; border-radius: 5px; background: #edf1fb; box-shadow: 0 0 1px #b4bccd; }
.running i { width: 20px; height: 4px; margin-top: 5px; border-radius: 2px; background: #0a78d4; }
.chev { margin-left: 169px; }
.cloud { margin-left: 22px; }
.lang { width: 50px; margin: -2px 0 0 12px; text-align: center; font-size: 15px; line-height: 20px; letter-spacing: -.4px; }
.tray { margin-left: 11px; }
.clock { width: 90px; margin: -3px 0 0 -1px; text-align: right; font-size: 15px; line-height: 20px; letter-spacing: -.2px; }
.bell { margin-left: 10px; }
.copilot { margin-left: 21px; position: relative; }
.copilot span { position: absolute; left: 8px; top: 20px; width: 22px; height: 10px; border-radius: 2px; background: #fcc30b; color: #111; font-size: 8.500px; line-height: 10px; font-weight: 800; text-align: center; }
```
